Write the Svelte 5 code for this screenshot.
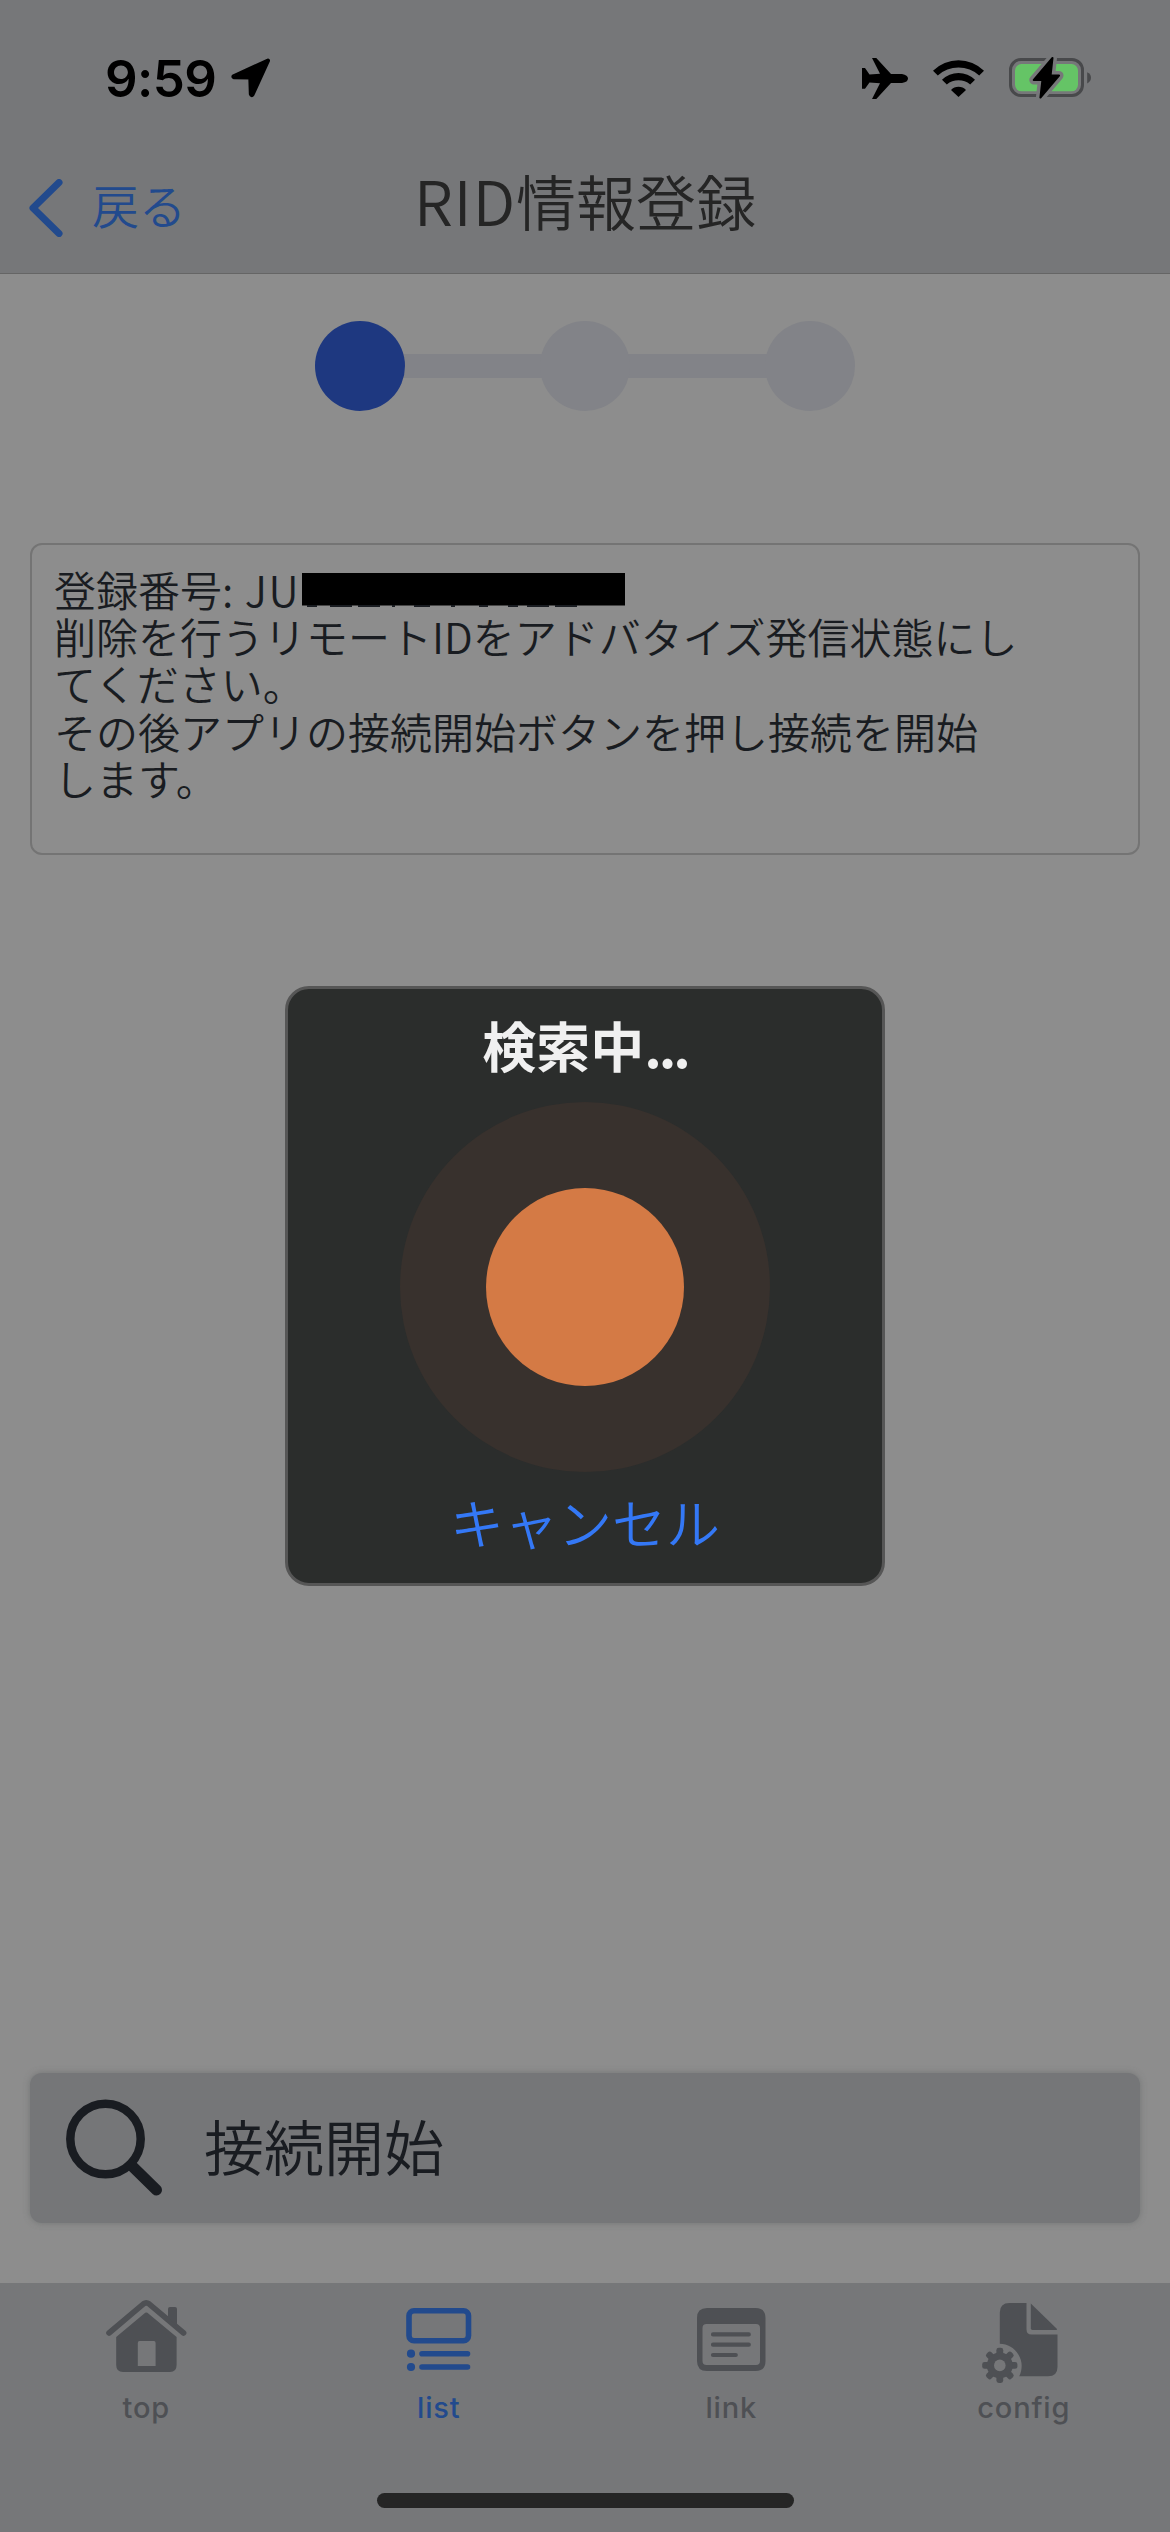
<script lang="ts">
	const steps = [
		{ id: 1, active: true },
		{ id: 2, active: false },
		{ id: 3, active: false }
	];

	const message = [
		'削除を行うリモートIDをアドバタイズ発信状態にし',
		'てください。',
		'その後アプリの接続開始ボタンを押し接続を開始',
		'します。'
	];

	const tabs = ['top', 'list', 'link', 'config'];
	const current = 'list';

	const gearTeeth = [0, 45, 90, 135];
</script>

<div class="screen">
	<header>
		<div class="status-bar">
			<div class="status-left">
				<span class="time">9:59</span>
				<svg class="location" width="40" height="40" viewBox="0 0 40 40">
					<path d="M37 2.6 2.6 18.2Q2 19 3 19.2L19.3 19.6 19.8 36Q20.6 38 21.6 36.5Z" />
				</svg>
			</div>
			<div class="status-right">
				<svg width="46" height="41" viewBox="0 0 46 41">
					<path
						d="M0 10H3L7.5 16.5 18 15.7 10 0H14.3L29 16H40Q46 17 46 20.5 46 24 40 25H29L14.3 41H10L18 25.3 7.5 24.5 3 30.7H0Z"
					/>
				</svg>
				<svg class="wifi" width="51" height="37" viewBox="0 0 51 37">
					<path d="M0 10.8A36.3 36.3 0 0 1 51 10.8L46.2 15.5A31 31 0 0 0 4.8 15.5Z" />
					<path d="M9 19.8A23.5 23.5 0 0 1 42 19.8L37.2 24.5A18.5 18.5 0 0 0 13.8 24.5Z" />
					<path d="M18 30A10.5 10.5 0 0 1 33 30L25.5 37Z" />
				</svg>
				<svg width="83" height="43" viewBox="0 0 83 43">
					<rect class="shell" x="1.5" y="2.5" width="72" height="36" rx="10.5" />
					<path class="shell-cap" d="M78.2 15.2Q82 17 82 20.8 82 24.6 78.2 26.4Z" />
					<rect class="charge" x="6" y="7" width="63" height="27.3" rx="6.5" />
					<path class="bolt-gap" d="M43.5 1 24.8 23H33.4L31.4 40.5 50 18.5H41.6Z" />
					<path class="bolt" d="M43.5 1 24.8 23H33.4L31.4 40.5 50 18.5H41.6Z" />
				</svg>
			</div>
		</div>
		<div class="nav-bar">
			<button class="back">
				<svg width="34" height="58" viewBox="0 0 34 58">
					<path d="M30 3.5 4 29 30 54.5" />
				</svg>
				<span>戻る</span>
			</button>
			<h1><span>RID</span>情報登録</h1>
		</div>
	</header>

	<main>
		<div class="stepper">
			{#each steps as step, i (step.id)}
				{#if i > 0}
					<span class="line"></span>
				{/if}
				<span class="dot" class:active={step.active}></span>
			{/each}
		</div>

		<section class="info">
			<p class="number">
				<span class="label">登録番号: <span class="prefix">JU</span></span>
				<svg width="323" height="35" viewBox="0 0 323 35">
					<rect width="323" height="32.5" />
					<path
						d="M5 33H15M28 33H50M56 33H78M90 33H93M112 33H128M149 33H153M177 33H186M206 33H216M225 33H247M253 33H275"
					/>
				</svg>
			</p>
			{#each message as line}
				<p>{line}</p>
			{/each}
		</section>

		<button class="connect">
			<svg width="102" height="98" viewBox="0 0 102 98">
				<circle cx="42.5" cy="40" r="35.2" />
				<path d="M68 66 93.5 91" />
			</svg>
			<span>接続開始</span>
		</button>
	</main>

	<nav class="tab-bar">
		{#each tabs as tab}
			<a href="#{tab}" class="tab" class:current={tab === current}>
				<svg width="90" height="90" viewBox="0 0 90 90">
					{#if tab === 'top'}
						<path class="roof" d="M8 38 42.5 8.8Q45.2 6.8 48 8.8L82.6 38" />
						<path d="M67 14Q67 12 69 12H74Q76 12 76 14V31L67 23Z" />
						<path
							fill-rule="evenodd"
							d="M43 18.7Q45.3 16.5 47.6 18.7L75.6 42V70Q75.6 77 69 77H22Q15.2 77 15.2 70V42ZM38.5 46Q36.8 46 36.8 48V71H54.6V48Q54.6 46 53 46Z"
						/>
					{:else if tab === 'list'}
						<rect class="outline" x="15" y="15.8" width="59.5" height="30" rx="5" />
						<circle cx="17" cy="58.7" r="4.1" />
						<circle cx="17" cy="72" r="4.1" />
						<path class="rule" d="M28 58.7H73.5M28 72H73.5" />
					{:else if tab === 'link'}
						<path
							fill-rule="evenodd"
							d="M21 13H69.5Q79.5 13 79.5 23V66Q79.5 76 69.5 76H21Q11 76 11 66V23Q11 13 21 13ZM20.5 29Q16.5 29 16.5 33V66Q16.5 70 20.5 70H70Q74 70 74 66V33Q74 29 70 29Z"
						/>
						<path class="text-line" d="M27 39.4H62.8M27 49.7H62.8M27 60H49.8" />
					{:else}
						<path
							d="M30.5 8H47.5V34.2Q47.5 39.5 52.5 39.5H78.5V72Q78.5 81.3 69 81.3H40.2A22.4 22.4 0 0 0 20.8 48.7V17.5Q20.8 8 30.5 8Z"
						/>
						<path d="M51.8 8.5 77.5 33.5Q78.6 35 77.5 35H53.5Q51.8 35 51.8 33.3Z" />
						<g transform="translate(20.8 70.4)">
							{#each gearTeeth as angle}
								<rect x="-3.4" y="-17.6" width="6.8" height="35.2" rx="2.4" transform="rotate({angle})" />
							{/each}
							<circle r="13" />
							<circle class="hole" r="5.8" />
						</g>
					{/if}
				</svg>
				<span>{tab}</span>
			</a>
		{/each}
	</nav>
	<div class="home-indicator"><span></span></div>

	<div class="dialog" role="dialog" aria-label="検索中">
		<h2>検索中<span>...</span></h2>
		<div class="pulse"><div class="core"></div></div>
		<button class="cancel">キャンセル</button>
	</div>
</div>

<style>
	:global(body) {
		margin: 0;
	}

	.screen {
		position: relative;
		display: flex;
		flex-direction: column;
		width: 1170px;
		height: 2532px;
		overflow: hidden;
		background: #8d8d8d;
		color: #191c21;
		font-family: 'Noto Sans CJK JP', sans-serif;
		font-weight: 350;
	}

	h1,
	h2,
	p {
		margin: 0;
	}

	button {
		padding: 0;
		border: 0;
		background: none;
		color: inherit;
		font: inherit;
	}

	svg {
		display: block;
		flex-shrink: 0;
	}

	header {
		box-sizing: border-box;
		height: 274px;
		border-bottom: 1px solid #656565;
		background: #767779;
	}

	.status-bar {
		display: flex;
		justify-content: space-between;
		align-items: center;
		height: 156px;
		padding: 0 78px 0 105px;
		color: #000;
	}

	.status-left,
	.status-right {
		display: flex;
		align-items: center;
	}

	.time {
		width: 126px;
		font-family: Inter, sans-serif;
		font-size: 51px;
		font-weight: 600;
		letter-spacing: -0.6px;
	}

	.location path {
		stroke: #000;
		stroke-width: 4;
		stroke-linejoin: round;
	}

	.wifi {
		margin: 0 25px;
	}

	.shell {
		fill: none;
		stroke: #48494b;
		stroke-width: 3;
	}

	.shell-cap {
		fill: #48494b;
	}

	.charge {
		fill: #65c466;
	}

	.bolt-gap {
		fill: #767779;
		stroke: #767779;
		stroke-width: 9;
		stroke-linejoin: round;
	}

	.bolt {
		stroke: #000;
		stroke-width: 2;
		stroke-linejoin: round;
	}

	.nav-bar {
		display: grid;
		grid-template-columns: 1fr auto 1fr;
		align-items: center;
		height: 96px;
		padding: 0 29px;
	}

	.back {
		display: flex;
		align-items: center;
		gap: 29px;
		padding-top: 6px;
		color: #224a8d;
		font-size: 47px;
		line-height: 60px;
	}

	.back span {
		margin-top: -7px;
	}

	.back path {
		fill: none;
		stroke: currentColor;
		stroke-width: 7;
		stroke-linecap: round;
		stroke-linejoin: round;
	}

	h1 {
		padding-bottom: 10px;
		color: #252525;
		font-size: 60px;
		font-weight: 350;
		line-height: 86px;
	}

	h1 span {
		font-size: 62px;
		letter-spacing: 1px;
	}

	main {
		display: flex;
		flex-direction: column;
		box-sizing: border-box;
		height: 2009px;
		padding: 47px 30px 60px;
	}

	.stepper {
		display: flex;
		justify-content: center;
		align-items: center;
	}

	.dot {
		z-index: 1;
		width: 90px;
		height: 90px;
		border-radius: 50%;
		background: #828388;
	}

	.dot.active {
		background: #1e3880;
	}

	.line {
		width: 139px;
		height: 24px;
		margin: 0 -2px;
		background: #828388;
	}

	.info {
		box-sizing: border-box;
		height: 312px;
		margin-top: 132px;
		padding: 20px 22px;
		border: 2px solid #747474;
		border-radius: 12px;
		font-size: 42px;
		line-height: 47.2px;
		white-space: nowrap;
	}

	.number {
		display: flex;
		align-items: center;
		height: 47.2px;
	}

	.number svg {
		margin-top: 4px;
	}

	.label {
		width: 248px;
	}

	.prefix {
		margin-left: 2px;
		letter-spacing: 1.5px;
	}

	.number path {
		stroke: #191c21;
		stroke-width: 2;
	}

	.connect {
		display: flex;
		align-items: center;
		gap: 39px;
		height: 150px;
		margin-top: auto;
		padding-left: 33px;
		border-radius: 12px;
		background: #757678;
		box-shadow: 0 0 6px rgba(90, 94, 94, 0.5);
		font-size: 60px;
	}

	.connect span {
		margin-top: -7px;
	}

	.connect circle {
		fill: none;
		stroke: #191c21;
		stroke-width: 8.5;
	}

	.connect path {
		fill: none;
		stroke: #191c21;
		stroke-width: 11;
		stroke-linecap: round;
	}

	.tab-bar {
		display: grid;
		grid-template-columns: repeat(4, 1fr);
		height: 210px;
		background: #767779;
	}

	.tab {
		display: flex;
		flex-direction: column;
		align-items: center;
		padding-top: 12px;
		color: #4e5054;
		font-family: Inter, sans-serif;
		font-size: 29px;
		font-weight: 500;
		line-height: 36px;
		letter-spacing: 0.8px;
		text-decoration: none;
	}

	.tab svg {
		margin-bottom: 5px;
		fill: currentColor;
	}

	.tab.current {
		color: #224a8d;
	}

	.roof,
	.outline,
	.rule,
	.text-line {
		fill: none;
		stroke: currentColor;
		stroke-width: 5.6;
		stroke-linecap: round;
		stroke-linejoin: round;
	}

	.text-line {
		stroke-width: 4.2;
	}

	.hole {
		fill: #767779;
	}

	.home-indicator {
		display: flex;
		flex: 1;
		justify-content: center;
		background: #767779;
	}

	.home-indicator span {
		width: 417px;
		height: 15px;
		border-radius: 8px;
		background: #252525;
	}

	.dialog {
		position: absolute;
		top: 986px;
		left: 285px;
		display: flex;
		flex-direction: column;
		align-items: center;
		box-sizing: border-box;
		width: 600px;
		height: 600px;
		padding-top: 16px;
		border: 3px solid #565656;
		border-radius: 24px;
		background: #2b2d2c;
	}

	h2 {
		color: #f0f0f0;
		font-size: 54px;
		font-weight: 700;
		line-height: 80px;
	}

	h2 span {
		letter-spacing: -3px;
	}

	.pulse {
		display: flex;
		justify-content: center;
		align-items: center;
		width: 370px;
		height: 370px;
		margin-top: 17px;
		border-radius: 50%;
		background: #38312d;
	}

	.core {
		width: 198px;
		height: 198px;
		border-radius: 50%;
		background: #d47a45;
	}

	.cancel {
		margin-top: 10px;
		color: #3478f6;
		font-size: 54px;
		line-height: 80px;
	}
</style>
